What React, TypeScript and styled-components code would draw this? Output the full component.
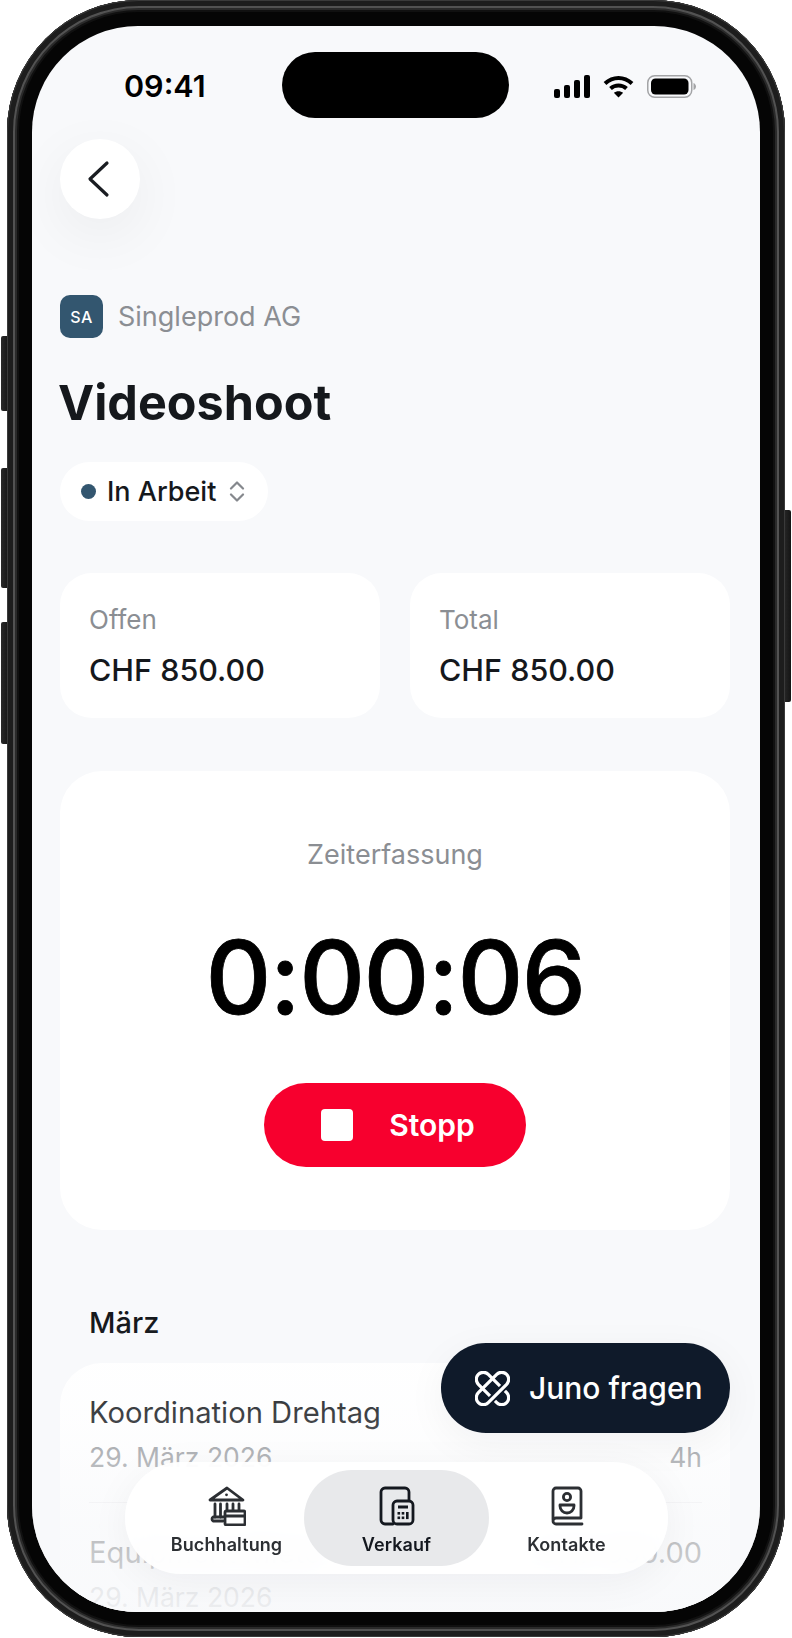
import React from "react";
import styled, { createGlobalStyle } from "styled-components";

const GlobalStyle = createGlobalStyle`
  html, body {
    margin: 0;
    padding: 0;
    background: #ffffff;
  }
  * {
    box-sizing: border-box;
  }
`;

const Device = styled.div`
  position: relative;
  width: 792px;
  height: 1638px;
  overflow: hidden;
  font-family: Inter, "Liberation Sans", sans-serif;
  color: #15181c;
`;

const SideButton = styled.div<{ $side: "left" | "right"; $top: number; $height: number }>`
  position: absolute;
  top: ${(p) => p.$top}px;
  height: ${(p) => p.$height}px;
  width: 8px;
  ${(p) => (p.$side === "left" ? "left: 1px;" : "right: 1px;")}
  border-radius: 2px;
  background: linear-gradient(90deg, #2a2a2a, #141414);
`;

const Shell = styled.div`
  position: absolute;
  left: 7px;
  top: 0;
  width: 778px;
  height: 1637px;
  padding: 26px 25px 25px;
  border-radius: 132px;
  background: #050505;
  box-shadow:
    inset 0 0 0 1px #3a3a3a,
    inset 0 0 0 6px #1d1d1d,
    inset 0 0 0 8px #525252,
    inset 0 0 0 10px #2a2a2a,
    inset 0 0 0 12px #101010;
`;

const Screen = styled.div`
  position: relative;
  height: 100%;
  overflow: hidden;
  border-radius: 106px;
  background: #f8f9fb;
`;

const Island = styled.div`
  position: absolute;
  left: 250px;
  top: 26px;
  width: 227px;
  height: 66px;
  border-radius: 33px;
  background: #000;
`;

const StatusBar = styled.div`
  display: flex;
  align-items: center;
  justify-content: space-between;
  height: 113px;
  padding: 47px 64px 40px 92px;
`;

const Clock = styled.span`
  font-size: 30.5px;
  line-height: 26px;
  font-weight: 600;
  color: #000;
`;

const StatusIcons = styled.div`
  display: flex;
  align-items: center;
  gap: 13px;
`;

const Content = styled.div`
  padding: 0 30px 0 28px;
`;

const BackButton = styled.button`
  display: flex;
  align-items: center;
  justify-content: center;
  width: 80px;
  height: 80px;
  padding: 0 5px 0 0;
  border: none;
  border-radius: 50%;
  background: #ffffff;
  box-shadow: 0 16px 60px rgba(20, 24, 32, 0.06);
`;

const CompanyRow = styled.div`
  display: flex;
  align-items: center;
  gap: 15px;
  margin-top: 76px;
`;

const CompanyLogo = styled.div`
  display: flex;
  align-items: center;
  justify-content: center;
  width: 43px;
  height: 43px;
  border-radius: 10px;
  background: #33566f;
  color: #ffffff;
  font-size: 16px;
  font-weight: 500;
  letter-spacing: 0.5px;
`;

const CompanyName = styled.span`
  font-size: 27px;
  color: #8b8e93;
`;

const Title = styled.h1`
  margin: 35px 0 0 -2px;
  font-size: 48.5px;
  line-height: 60px;
  font-weight: 700;
  color: #15181c;
`;

const StatusPill = styled.div`
  display: inline-flex;
  align-items: center;
  height: 59px;
  margin-top: 29px;
  padding: 0 23px 0 21px;
  border-radius: 30px;
  background: #ffffff;
`;

const StatusDot = styled.span`
  width: 15px;
  height: 15px;
  margin-right: 11px;
  border-radius: 50%;
  background: #33566f;
`;

const StatusLabel = styled.span`
  margin-right: 13px;
  font-size: 27px;
  font-weight: 500;
`;

const Summary = styled.div`
  display: grid;
  grid-template-columns: 1fr 1fr;
  gap: 30px;
  margin-top: 52px;
`;

const SummaryCard = styled.div`
  height: 145px;
  padding: 32px 29px;
  border-radius: 32px;
  background: #ffffff;
`;

const SummaryLabel = styled.div`
  font-size: 26px;
  line-height: 30px;
  color: #8b8e93;
`;

const SummaryValue = styled.div`
  margin-top: 19px;
  font-size: 30.5px;
  line-height: 32px;
  font-weight: 500;
`;

const TimerCard = styled.section`
  display: flex;
  flex-direction: column;
  align-items: center;
  margin-top: 53px;
  padding: 68px 0 63px;
  border-radius: 42px;
  background: #ffffff;
`;

const TimerLabel = styled.div`
  font-size: 27px;
  line-height: 32px;
  color: #8b8e93;
`;

const TimerValue = styled.div`
  margin-top: 51px;
  font-size: 102px;
  line-height: 110px;
  font-weight: 500;
  letter-spacing: -1.5px;
  -webkit-text-stroke: 0.8px #000;
  color: #000;
`;

const StopButton = styled.button`
  display: flex;
  align-items: center;
  justify-content: center;
  gap: 36px;
  width: 262px;
  height: 84px;
  margin-top: 51px;
  padding: 0 0 0 6px;
  border: none;
  border-radius: 42px;
  background: #f7002e;
  color: #ffffff;
  font-family: inherit;
  font-size: 30px;
  font-weight: 600;
`;

const StopSquare = styled.span`
  width: 32px;
  height: 32px;
  border-radius: 4px;
  background: #ffffff;
`;

const MonthHeading = styled.h2`
  margin: 76px 0 0 29px;
  font-size: 29px;
  line-height: 34px;
  font-weight: 500;
`;

const EntryList = styled.div`
  margin-top: 23px;
  padding: 0 28px 0 29px;
  border-radius: 42px 42px 0 0;
  background: #ffffff;
`;

const Entry = styled.div`
  display: grid;
  grid-template-columns: 1fr auto;
  row-gap: 10px;
  padding: 32px 0 29px;
  border-bottom: 1px solid #ececee;
`;

const EntryTitle = styled.div`
  font-size: 29.2px;
  line-height: 36px;
`;

const EntryValue = styled.div`
  font-size: 29px;
  line-height: 36px;
  text-align: right;
`;

const EntryMeta = styled.div`
  font-size: 26.5px;
  line-height: 32px;
  color: #8b8e93;
`;

const BottomFade = styled.div`
  position: absolute;
  left: 0;
  right: 0;
  bottom: 0;
  height: 290px;
  background: linear-gradient(
    180deg,
    rgba(248, 249, 251, 0) 0%,
    rgba(248, 249, 251, 0.2) 35%,
    rgba(248, 249, 251, 0.72) 70%,
    rgba(248, 249, 251, 0.9) 100%
  );
  pointer-events: none;
`;

const AskButton = styled.button`
  position: absolute;
  right: 30px;
  bottom: 179px;
  display: flex;
  align-items: center;
  gap: 19px;
  width: 289px;
  height: 90px;
  padding: 0 0 0 34px;
  border: none;
  border-radius: 45px;
  background: #0f1a2a;
  color: #ffffff;
  font-family: inherit;
  font-size: 30px;
  font-weight: 500;
  box-shadow: 0 10px 40px rgba(15, 26, 42, 0.05);
`;

const TabBar = styled.nav`
  position: absolute;
  left: 93px;
  bottom: 38px;
  display: grid;
  grid-template-columns: 1fr 185px 1fr;
  width: 543px;
  height: 112px;
  padding: 8px 24px;
  border-radius: 56px;
  background: rgba(255, 255, 255, 0.9);
  backdrop-filter: blur(12px);
  box-shadow: 0 8px 40px rgba(20, 24, 32, 0.05);
`;

const Tab = styled.div<{ $active?: boolean }>`
  display: flex;
  flex-direction: column;
  align-items: center;
  padding-top: 16px;
  border-radius: 48px;
  background: ${(p) => (p.$active ? "rgba(226, 227, 230, 0.8)" : "transparent")};
  color: ${(p) => (p.$active ? "#14181f" : "#2c2f33")};
`;

const TabIcon = styled.div`
  display: flex;
  align-items: flex-end;
  justify-content: center;
  height: 40px;
`;

const TabLabel = styled.span`
  margin-top: 8px;
  font-size: 18px;
  line-height: 22px;
  font-weight: 600;
  letter-spacing: 0.1px;
  white-space: nowrap;
`;

function SignalIcon() {
  return (
    <svg width="36" height="23" viewBox="0 0 36 23" fill="#000">
      <rect x="0" y="14" width="6" height="9" rx="2" />
      <rect x="10" y="10" width="6" height="13" rx="2" />
      <rect x="20" y="5" width="6" height="18" rx="2" />
      <rect x="30" y="0" width="6" height="23" rx="2" />
    </svg>
  );
}

function WifiIcon() {
  return (
    <svg width="31" height="23" viewBox="0 0 31 23" fill="none" stroke="#000" strokeWidth="4">
      <path d="M2 8.5C10 1 21 1 29 8.5" />
      <path d="M7.5 13.5C12 9.5 19 9.5 23.5 13.5" />
      <path d="M15.5 22.5L10.8 17.8C13.5 15.6 17.5 15.6 20.2 17.8Z" fill="#000" stroke="none" />
    </svg>
  );
}

function BatteryIcon() {
  return (
    <svg width="49" height="23" viewBox="0 0 49 23">
      <rect x="0.75" y="0.75" width="44" height="21.5" rx="7" fill="none" stroke="#a3a4a6" strokeWidth="1.5" />
      <rect x="4" y="3.5" width="37.5" height="16" rx="4.5" fill="#000" />
      <path d="M46.5 8C48 8.5 49 10 49 11.5C49 13 48 14.5 46.5 15Z" fill="#a3a4a6" />
    </svg>
  );
}

function BackChevron() {
  return (
    <svg width="24" height="38" viewBox="0 0 24 38" fill="none" stroke="#1a1d22" strokeWidth="3.2" strokeLinecap="round" strokeLinejoin="round">
      <path d="M21 3L4 19L21 35" />
    </svg>
  );
}

function UpDownChevron() {
  return (
    <svg width="16" height="21" viewBox="0 0 16 21" fill="none" stroke="#85888d" strokeWidth="2.2" strokeLinecap="round" strokeLinejoin="round">
      <path d="M2 7.5L8 1.5L14 7.5" />
      <path d="M2 13.5L8 19.5L14 13.5" />
    </svg>
  );
}

function JunoIcon() {
  return (
    <svg width="35" height="35" viewBox="-17.5 -17.5 35 35" fill="none" stroke="#ffffff" strokeWidth="3.2">
      <rect x="-20" y="-7" width="40" height="14" rx="7" transform="rotate(45)" />
      <g transform="rotate(-45)">
        <path d="M-10 7H10" stroke="#0f1a2a" strokeWidth="7" />
        <rect x="-20" y="-7" width="40" height="14" rx="7" />
      </g>
    </svg>
  );
}

function BankIcon() {
  return (
    <svg width="38" height="40" viewBox="0 0 38 40" fill="none" stroke="currentColor" strokeWidth="2.8" strokeLinejoin="round" strokeLinecap="round">
      <path d="M2 14L19 2L35 14Z" />
      <circle cx="18.5" cy="8.8" r="1.4" fill="currentColor" stroke="none" />
      <path d="M7 18V31M12.5 18V31M19 18V24M25 18V24M31 18V24" />
      <path d="M15 35H5A2.5 2.5 0 0 1 5 31H15" />
      <rect x="17" y="25" width="20" height="14" rx="1.5" />
      <path d="M17 30H37" />
    </svg>
  );
}

function CalculatorIcon() {
  return (
    <svg width="36" height="40" viewBox="0 0 36 40" fill="none" stroke="currentColor" strokeWidth="2.8" strokeLinejoin="round" strokeLinecap="round">
      <path d="M14 38H6A4 4 0 0 1 2 34V6A4 4 0 0 1 6 2H26A4 4 0 0 1 30 6V14" />
      <rect x="14" y="15" width="20" height="23" rx="4" />
      <rect x="19" y="19.5" width="10" height="3" fill="currentColor" stroke="none" />
      <g fill="currentColor" stroke="none">
        <rect x="18.5" y="26" width="2.6" height="2.6" />
        <rect x="22.7" y="26" width="2.6" height="2.6" />
        <rect x="18.5" y="30.5" width="2.6" height="2.6" />
        <rect x="22.7" y="30.5" width="2.6" height="2.6" />
        <rect x="27" y="26" width="2.6" height="7.1" />
      </g>
    </svg>
  );
}

function ContactBookIcon() {
  return (
    <svg width="34" height="40" viewBox="0 0 34 40" fill="none" stroke="currentColor" strokeWidth="2.8" strokeLinejoin="round" strokeLinecap="round">
      <path d="M3 34V5A3 3 0 0 1 6 2H28A3 3 0 0 1 31 5V32H6A3 3 0 0 0 3 35A3 3 0 0 0 6 38H32" />
      <circle cx="17" cy="11" r="3.6" />
      <path d="M10 19H24V20A7 7 0 0 1 10 20Z" />
    </svg>
  );
}

export default function App() {
  return (
    <Device>
      <GlobalStyle />
      <SideButton $side="left" $top={336} $height={75} />
      <SideButton $side="left" $top={468} $height={120} />
      <SideButton $side="left" $top={622} $height={122} />
      <SideButton $side="right" $top={510} $height={192} />
      <Shell>
        <Screen>
          <StatusBar>
            <Clock>09:41</Clock>
            <StatusIcons>
              <SignalIcon />
              <WifiIcon />
              <BatteryIcon />
            </StatusIcons>
          </StatusBar>
          <Content>
            <BackButton aria-label="Zurück">
              <BackChevron />
            </BackButton>
            <CompanyRow>
              <CompanyLogo>SA</CompanyLogo>
              <CompanyName>Singleprod AG</CompanyName>
            </CompanyRow>
            <Title>Videoshoot</Title>
            <StatusPill>
              <StatusDot />
              <StatusLabel>In Arbeit</StatusLabel>
              <UpDownChevron />
            </StatusPill>
            <Summary>
              <SummaryCard>
                <SummaryLabel>Offen</SummaryLabel>
                <SummaryValue>CHF 850.00</SummaryValue>
              </SummaryCard>
              <SummaryCard>
                <SummaryLabel>Total</SummaryLabel>
                <SummaryValue>CHF 850.00</SummaryValue>
              </SummaryCard>
            </Summary>
            <TimerCard>
              <TimerLabel>Zeiterfassung</TimerLabel>
              <TimerValue>0:00:06</TimerValue>
              <StopButton>
                <StopSquare />
                Stopp
              </StopButton>
            </TimerCard>
            <MonthHeading>März</MonthHeading>
            <EntryList>
              <Entry>
                <EntryTitle>Koordination Drehtag</EntryTitle>
                <EntryValue />
                <EntryMeta>29. März 2026</EntryMeta>
                <EntryMeta>4h</EntryMeta>
              </Entry>
              <Entry>
                <EntryTitle>Equipment Miete</EntryTitle>
                <EntryValue>CHF 850.00</EntryValue>
                <EntryMeta>29. März 2026</EntryMeta>
              </Entry>
            </EntryList>
          </Content>
          <BottomFade />
          <Island />
          <AskButton>
            <JunoIcon />
            Juno fragen
          </AskButton>
          <TabBar>
            <Tab>
              <TabIcon>
                <BankIcon />
              </TabIcon>
              <TabLabel>Buchhaltung</TabLabel>
            </Tab>
            <Tab $active>
              <TabIcon>
                <CalculatorIcon />
              </TabIcon>
              <TabLabel>Verkauf</TabLabel>
            </Tab>
            <Tab>
              <TabIcon>
                <ContactBookIcon />
              </TabIcon>
              <TabLabel>Kontakte</TabLabel>
            </Tab>
          </TabBar>
        </Screen>
      </Shell>
    </Device>
  );
}
